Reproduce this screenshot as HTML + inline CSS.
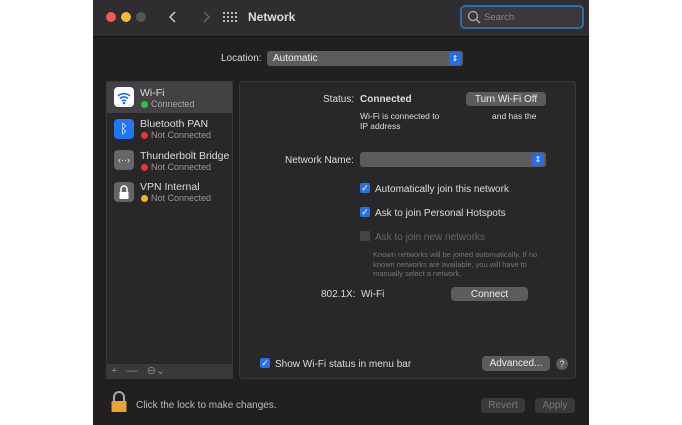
<!DOCTYPE html><html><head><style>
body{margin:0;width:682px;height:425px;background:#fff;font-family:"Liberation Sans",sans-serif;position:relative;overflow:hidden;color:#ddd}
.a{position:absolute}
.win{left:93px;top:0;width:496px;height:425px;background:#211f22}
.tb{left:93px;top:0;width:496px;height:36px;background:#2f2d30;border-bottom:1px solid #111}
.t{font-size:10px;white-space:nowrap}
.btn{background:#5d5b5e;border-radius:4px;color:#eee;font-size:10px;text-align:center}
.cb{width:10px;height:10px;background:#2a72e0;border-radius:2px;color:#fff;font-size:9px;line-height:10px;text-align:center}
.dot{width:7px;height:7px;border-radius:50%}
</style></head><body>
<div class="a win"></div>
<div class="a tb"></div>
<div class="a dot" style="left:106px;top:12px;width:10px;height:10px;background:#ee5b55"></div>
<div class="a dot" style="left:121px;top:12px;width:10px;height:10px;background:#f3b93a"></div>
<div class="a dot" style="left:136px;top:12px;width:10px;height:10px;background:#555"></div>
<svg class="a" style="left:166px;top:9px" width="50" height="16"><path d="M9 3L4 8L9 13" stroke="#ccc" stroke-width="1.5" fill="none"/><path d="M38 3L43 8L38 13" stroke="#666" stroke-width="1.5" fill="none"/></svg>
<svg class="a" style="left:222px;top:11px" width="16" height="12" fill="#bbb"><g><rect x="1" y="1" width="2" height="2"/><rect x="5" y="1" width="2" height="2"/><rect x="9" y="1" width="2" height="2"/><rect x="13" y="1" width="2" height="2"/><rect x="1" y="5" width="2" height="2"/><rect x="5" y="5" width="2" height="2"/><rect x="9" y="5" width="2" height="2"/><rect x="13" y="5" width="2" height="2"/><rect x="1" y="9" width="2" height="2"/><rect x="5" y="9" width="2" height="2"/><rect x="9" y="9" width="2" height="2"/><rect x="13" y="9" width="2" height="2"/></g></svg>
<div class="a" style="left:248px;top:10px;font-size:12px;font-weight:bold;color:#ddd">Network</div>
<div class="a" style="left:460px;top:5px;width:120px;height:20px;border:2px solid #2f6fa5;border-radius:5px;background:#3a383b"></div>
<svg class="a" style="left:467px;top:10px" width="14" height="14"><circle cx="6" cy="6" r="4.5" stroke="#aaa" stroke-width="1.3" fill="none"/><path d="M9.5 9.5L13 13" stroke="#aaa" stroke-width="1.5"/></svg>
<div class="a t" style="left:484px;top:12px;color:#888;font-size:9.5px">Search</div>
<div class="a t" style="left:221px;top:53px">Location:</div>
<div class="a" style="left:267px;top:51px;width:196px;height:15px;background:#5d5b5e;border-radius:3px"></div>
<div class="a t" style="left:273px;top:53px;color:#eee">Automatic</div>
<div class="a" style="left:449px;top:52px;width:12px;height:13px;background:#2b6ce0;border-radius:3px;color:#fff;font-size:8px;text-align:center;line-height:13px">⇕</div>
<div class="a" style="left:106px;top:81px;width:127px;height:298px;background:#29272a;border:1px solid #3a383b;box-sizing:border-box"></div>
<div class="a" style="left:107px;top:82px;width:125px;height:31px;background:#434144"></div>
<div class="a" style="left:114px;top:87px;width:20px;height:20px;background:#fff;border-radius:4px"></div>
<svg class="a" style="left:114px;top:87px" width="20" height="20"><path d="M4 9A9 9 0 0 1 16 9M6 11.5A6 6 0 0 1 14 11.5M8 14A3 3 0 0 1 12 14" stroke="#1c6fe3" stroke-width="1.6" fill="none"/><circle cx="10" cy="16" r="1.3" fill="#1c6fe3"/></svg>
<div class="a" style="left:114px;top:119px;width:20px;height:20px;background:#1f78f0;border-radius:4px;color:#fff;font-size:13px;text-align:center;line-height:20px">ᛒ</div>
<div class="a" style="left:114px;top:150px;width:20px;height:20px;background:#666;border-radius:4px;color:#eee;font-size:9px;text-align:center;line-height:20px">‹··›</div>
<div class="a" style="left:114px;top:182px;width:20px;height:20px;background:#666;border-radius:4px"></div>
<svg class="a" style="left:114px;top:182px" width="20" height="20"><path d="M7 10V7A3 3 0 0 1 13 7V10" stroke="#fff" stroke-width="1.5" fill="none"/><rect x="5.5" y="10" width="9" height="7" fill="#fff"/></svg>
<div class="a t" style="left:140px;top:87px;font-size:10.5px">Wi-Fi</div>
<div class="a dot" style="left:141px;top:101px;background:#2dc03c"></div><div class="a t" style="left:151px;top:99px;font-size:9px;color:#aaa">Connected</div>
<div class="a t" style="left:140px;top:118px;font-size:10.5px">Bluetooth PAN</div>
<div class="a dot" style="left:141px;top:132px;background:#e8343a"></div><div class="a t" style="left:151px;top:130px;font-size:9px;color:#999">Not Connected</div>
<div class="a t" style="left:140px;top:150px;font-size:10.5px">Thunderbolt Bridge</div>
<div class="a dot" style="left:141px;top:164px;background:#e8343a"></div><div class="a t" style="left:151px;top:162px;font-size:9px;color:#999">Not Connected</div>
<div class="a t" style="left:140px;top:181px;font-size:10.5px">VPN Internal</div>
<div class="a dot" style="left:141px;top:195px;background:#f3b12c"></div><div class="a t" style="left:151px;top:193px;font-size:9px;color:#999">Not Connected</div>
<div class="a" style="left:107px;top:364px;width:125px;height:15px;background:#3a383b"></div>
<div class="a t" style="left:111px;top:364px;color:#888;font-size:11px">+&nbsp;&nbsp;&nbsp;—&nbsp;&nbsp;&nbsp;⊖⌄</div>
<div class="a" style="left:239px;top:81px;width:337px;height:298px;background:#29272a;border:1px solid #3a383b;border-radius:4px;box-sizing:border-box"></div>
<div class="a t" style="left:323px;top:94px">Status:</div>
<div class="a t" style="left:360px;top:94px;font-weight:bold">Connected</div>
<div class="a btn" style="left:466px;top:92px;width:80px;height:14px;line-height:15px">Turn Wi-Fi Off</div>
<div class="a t" style="left:360px;top:111px;font-size:8.5px">Wi-Fi is connected to</div>
<div class="a t" style="left:492px;top:111px;font-size:8.5px">and has the</div>
<div class="a t" style="left:360px;top:121px;font-size:8.5px">IP address</div>
<div class="a t" style="left:285px;top:155px">Network Name:</div>
<div class="a" style="left:360px;top:152px;width:186px;height:15px;background:#5d5b5e;border-radius:3px"></div>
<div class="a" style="left:532px;top:153px;width:12px;height:13px;background:#2b6ce0;border-radius:3px;color:#fff;font-size:8px;text-align:center;line-height:13px">⇕</div>
<div class="a cb" style="left:360px;top:183px">✓</div><div class="a t" style="left:375px;top:184px">Automatically join this network</div>
<div class="a cb" style="left:360px;top:207px">✓</div><div class="a t" style="left:375px;top:208px">Ask to join Personal Hotspots</div>
<div class="a cb" style="left:360px;top:231px;background:#444"></div><div class="a t" style="left:375px;top:232px;color:#666">Ask to join new networks</div>
<div class="a" style="left:373px;top:250px;font-size:7.5px;line-height:9.7px;color:#777;width:180px">Known networks will be joined automatically. If no known networks are available, you will have to manually select a network.</div>
<div class="a t" style="left:321px;top:289px">802.1X:&nbsp; Wi-Fi</div>
<div class="a btn" style="left:451px;top:287px;width:77px;height:14px;line-height:15px">Connect</div>
<div class="a cb" style="left:260px;top:358px">✓</div><div class="a t" style="left:275px;top:359px">Show Wi-Fi status in menu bar</div>
<div class="a btn" style="left:482px;top:356px;width:68px;height:15px;line-height:16px">Advanced...</div>
<div class="a" style="left:556px;top:358px;width:12px;height:12px;border-radius:50%;background:#5d5b5e;color:#ddd;font-size:9px;text-align:center;line-height:12px">?</div>
<svg class="a" style="left:110px;top:391px" width="18" height="22"><path d="M4 10V6A5 5 0 0 1 14 6V10" stroke="#aaa" stroke-width="2" fill="none"/><rect x="1.5" y="10" width="15" height="11" rx="1" fill="#e6a43e"/></svg>
<div class="a t" style="left:136px;top:400px;color:#bbb">Click the lock to make changes.</div>
<div class="a btn" style="left:481px;top:398px;width:44px;height:15px;line-height:15px;background:#3a383b;color:#777">Revert</div>
<div class="a btn" style="left:535px;top:398px;width:40px;height:15px;line-height:15px;background:#3a383b;color:#777">Apply</div>
</body></html>
